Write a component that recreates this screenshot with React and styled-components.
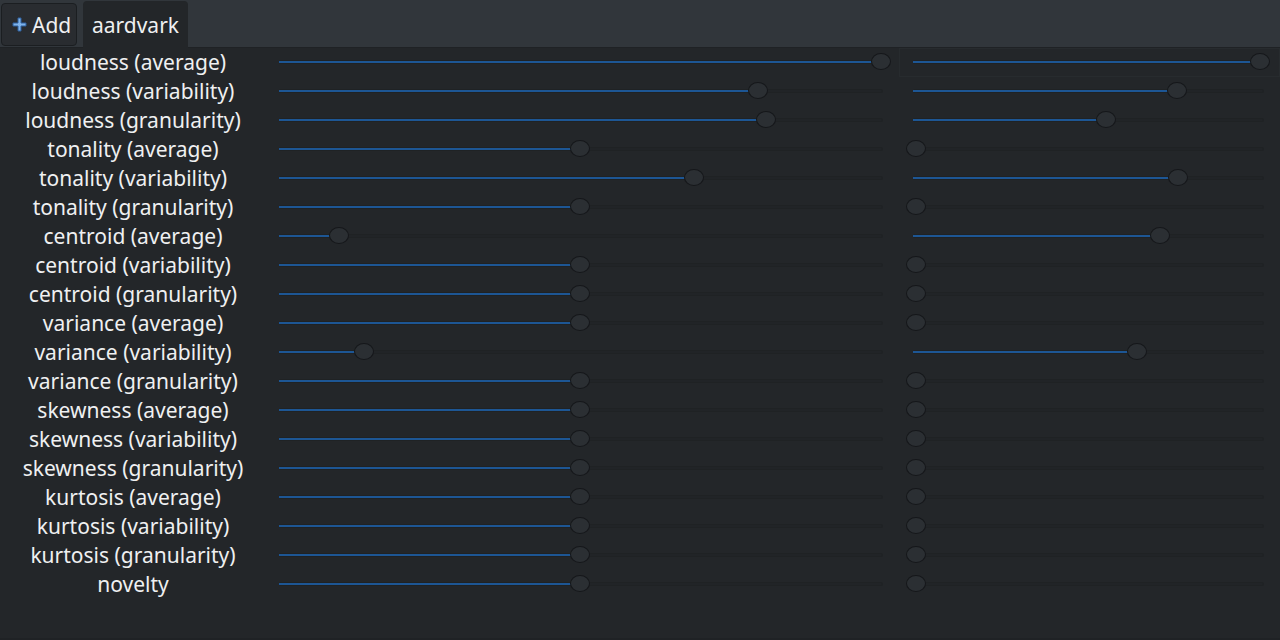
import React from "react";
import styled, { createGlobalStyle } from "styled-components";

const GlobalStyle = createGlobalStyle`
  html, body {
    margin: 0;
    padding: 0;
    background: #232629;
  }
  body {
    font-family: "Noto Sans", "DejaVu Sans", sans-serif;
    color: #eff0f1;
  }
`;

const Window = styled.div`
  width: 1280px;
  height: 640px;
  display: flex;
  flex-direction: column;
  background: #232629;
  overflow: hidden;
`;

const TabBar = styled.div`
  height: 48px;
  display: flex;
  align-items: flex-start;
  gap: 6px;
  padding: 0 0 0 1px;
  background: #31363b;
  border-bottom: 1px solid #1f2225;
  box-sizing: border-box;
`;

const AddButton = styled.div`
  margin-top: 3px;
  width: 76px;
  height: 43px;
  display: flex;
  align-items: center;
  justify-content: flex-start;
  gap: 5px;
  padding-left: 10px;
  box-sizing: border-box;
  background: #292c30;
  border: 1px solid #1b1e21;
  border-radius: 4px;
  font-size: 21px;
  color: #eff0f1;
`;

const Tab = styled.div`
  margin-top: 1px;
  width: 105px;
  height: 47px;
  display: flex;
  align-items: center;
  justify-content: center;
  box-sizing: border-box;
  background: #232629;
  border-radius: 4px 4px 0 0;
  font-size: 21px;
  color: #eff0f1;
`;

const Panel = styled.div`
  flex: 1;
  display: flex;
  flex-direction: column;
  border-bottom: 2px solid #1f2225;
`;

const Row = styled.div`
  height: 29px;
  display: flex;
  align-items: center;
  flex-shrink: 0;
`;

const Label = styled.div`
  width: 266px;
  text-align: center;
  font-size: 21px;
  line-height: 29px;
  white-space: nowrap;
  color: #eff0f1;
`;

const SliderBox = styled.div`
  position: relative;
  height: 29px;
  margin-left: ${(p) => p.$ml}px;
  width: ${(p) => p.$w}px;
  box-sizing: border-box;
  border: 1px solid ${(p) => (p.$focus ? "#272b2e" : "transparent")};
`;

const Groove = styled.div`
  position: absolute;
  top: 11px;
  left: ${(p) => p.$left}px;
  right: ${(p) => p.$right}px;
  height: 4px;
  border-radius: 2px;
  background: #212427;
  border: 1px solid #1f2224;
  box-sizing: border-box;
`;

const Fill = styled.div`
  position: absolute;
  top: 12px;
  left: ${(p) => p.$left}px;
  height: 2px;
  background: #1d5694;
`;

const Handle = styled.div`
  position: absolute;
  top: 4px;
  width: 20px;
  height: 17px;
  margin-left: -10px;
  border-radius: 50%;
  background: #2b2f33;
  border: 1px solid #15171a;
  box-sizing: border-box;
`;

const rows = [
  ["loudness (average)", 1, 1],
  ["loudness (variability)", 0.796, 0.759],
  ["loudness (granularity)", 0.809, 0.552],
  ["tonality (average)", 0.5, 0],
  ["tonality (variability)", 0.689, 0.762],
  ["tonality (granularity)", 0.5, 0],
  ["centroid (average)", 0.1, 0.709],
  ["centroid (variability)", 0.5, 0],
  ["centroid (granularity)", 0.5, 0],
  ["variance (average)", 0.5, 0],
  ["variance (variability)", 0.141, 0.642],
  ["variance (granularity)", 0.5, 0],
  ["skewness (average)", 0.5, 0],
  ["skewness (variability)", 0.5, 0],
  ["skewness (granularity)", 0.5, 0],
  ["kurtosis (average)", 0.5, 0],
  ["kurtosis (variability)", 0.5, 0],
  ["kurtosis (granularity)", 0.5, 0],
  ["novelty", 0.5, 0],
];

// min/max = handle center range inside the box
const Slider = ({ value, ml, w, min, max, fillStart, grooveRight, focus }) => {
  const cx = min + value * (max - min);
  return (
    <SliderBox $ml={ml} $w={w} $focus={focus}>
      <Groove $left={fillStart} $right={grooveRight} />
      <Fill $left={fillStart} style={{ width: Math.max(0, cx - fillStart) }} />
      <Handle style={{ left: cx }} />
    </SliderBox>
  );
};

const PlusIcon = () => (
  <svg width="15" height="15" viewBox="0 0 15 15">
    <path
      d="M6 1h3v5h5v3H9v5H6V9H1V6h5z"
      fill="#7fb3ea"
      stroke="#2d5f9e"
      strokeWidth="1"
    />
  </svg>
);

export default function App() {
  return (
    <>
      <GlobalStyle />
      <Window>
        <TabBar>
          <AddButton>
            <PlusIcon />
            Add
          </AddButton>
          <Tab>aardvark</Tab>
        </TabBar>
        <Panel>
          {rows.map(([name, a, b], i) => (
            <Row key={name}>
              <Label>{name}</Label>
              <Slider
                value={a}
                ml={2}
                w={628}
                min={10}
                max={612}
                fillStart={10}
                grooveRight={12}
              />
              <Slider
                value={b}
                ml={3}
                w={381}
                min={16}
                max={360}
                fillStart={13}
                grooveRight={15}
                focus={i === 0}
              />
            </Row>
          ))}
        </Panel>
      </Window>
    </>
  );
}
